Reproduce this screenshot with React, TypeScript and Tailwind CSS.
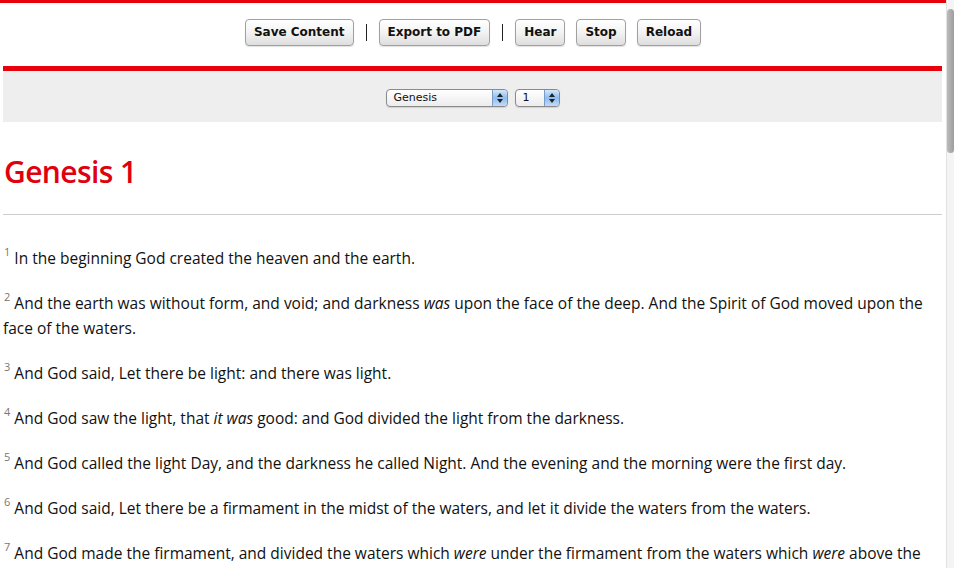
import React from 'react';

type Verse = { n: number; parts: (string | { i: string })[] };

const verses: Verse[] = [
    { n: 1, parts: ['In the beginning God created the heaven and the earth.'] },
    { n: 2, parts: ['And the earth was without form, and void; and darkness ', { i: 'was' }, ' upon the face of the deep. And the Spirit of God moved upon the face of the waters.'] },
    { n: 3, parts: ['And God said, Let there be light: and there was light.'] },
    { n: 4, parts: ['And God saw the light, that ', { i: 'it was' }, ' good: and God divided the light from the darkness.'] },
    { n: 5, parts: ['And God called the light Day, and the darkness he called Night. And the evening and the morning were the first day.'] },
    { n: 6, parts: ['And God said, Let there be a firmament in the midst of the waters, and let it divide the waters from the waters.'] },
    { n: 7, parts: ['And God made the firmament, and divided the waters which ', { i: 'were' }, ' under the firmament from the waters which ', { i: 'were' }, ' above the firmament: and it was so.'] },
    { n: 8, parts: ['And God called the firmament Heaven. And the evening and the morning were the second day.'] },
];

const MacButton: React.FC<{ label: string }> = ({ label }) => (
    <button className="h-[27px] px-[8px] rounded-[4px] border border-[#a0a0a0] bg-gradient-to-b from-white via-[#f3f3f3] to-[#dedede] text-[12px] font-bold text-[#111] shadow-[0_1px_1px_rgba(0,0,0,0.12)] [font-family:'DejaVu_Sans',sans-serif] leading-none">
        {label}
    </button>
);

const Divider: React.FC = () => (
    <span className="mx-[12px] h-[17px] w-[1px] bg-[#222]" />
);

const Stepper: React.FC = () => (
    <div className="w-[15px] h-full rounded-r-[4px] bg-gradient-to-b from-[#d3e7fc] via-[#8dbcf0] to-[#c2dbf7] border-l border-[#7a9cc6] flex flex-col items-center justify-center gap-[2px]">
        <svg width="6" height="4" viewBox="0 0 6 4"><path d="M3 0L6 4H0z" fill="#222" /></svg>
        <svg width="6" height="4" viewBox="0 0 6 4"><path d="M0 0H6L3 4z" fill="#222" /></svg>
    </div>
);

const MacSelect: React.FC<{ value: string; width: string }> = ({ value, width }) => (
    <div className={`${width} h-[18px] rounded-[4px] border border-[#8a8a8a] bg-gradient-to-b from-white to-[#ececec] flex items-stretch shadow-[0_1px_1px_rgba(0,0,0,0.12)]`}>
        <span className="flex-1 pl-[7px] text-[11px] leading-[16px] text-[#111] [font-family:'DejaVu_Sans',sans-serif]">{value}</span>
        <Stepper />
    </div>
);

const App: React.FC = () => {
    return (
        <div className="h-[568px] w-[954px] overflow-hidden flex items-start bg-white">
            <div className="flex-1">
                <div className="h-[3px] bg-[#e8000b]" />
                <div className="h-[63px] flex items-center justify-center pb-[5px]">
                    <MacButton label="Save Content" />
                    <Divider />
                    <MacButton label="Export to PDF" />
                    <Divider />
                    <div className="flex gap-[11px]">
                        <MacButton label="Hear" />
                        <MacButton label="Stop" />
                        <MacButton label="Reload" />
                    </div>
                </div>

                <div className="ml-[3px] mr-[4px] [font-family:'Open_Sans',sans-serif]">
                    <div className="h-[5px] bg-[#e8000b]" />
                    <div className="h-[51px] bg-[#eeeeee] flex items-center justify-center gap-[7px] pt-[3px]">
                        <MacSelect value="Genesis" width="w-[122px]" />
                        <MacSelect value="1" width="w-[45px]" />
                    </div>

                    <h1 className="pt-[30px] text-[30px] leading-[40px] font-semibold text-[#e1000f] pl-[1px] tracking-[-0.6px]">Genesis 1</h1>
                    <hr className="mt-[22px] border-t border-[#cccccc]" />

                    <div className="pt-[31px] text-[15.5px] leading-[25px] text-[#111]">
                        {verses.map(v => (
                            <p key={v.n} className="mb-[20px]">
                                <sup className="text-[11px] text-[#777] pl-[1px] align-[3px]">{v.n}</sup>{' '}
                                {v.parts.map((p, idx) =>
                                    typeof p === 'string' ? <React.Fragment key={idx}>{p}</React.Fragment> : <em key={idx}>{p.i}</em>
                                )}
                            </p>
                        ))}
                    </div>
                </div>
            </div>

            {/* faux scrollbar */}
            <div className="h-[568px] w-[8px] bg-[#f4f4f4] border-l border-[#e2e2e2] pt-[9px]">
                <div className="h-[144px] w-[7px] rounded-[4px] bg-gradient-to-r from-[#bcbcbc] to-[#9d9d9d]" />
            </div>
        </div>
    );
};

export default App;
